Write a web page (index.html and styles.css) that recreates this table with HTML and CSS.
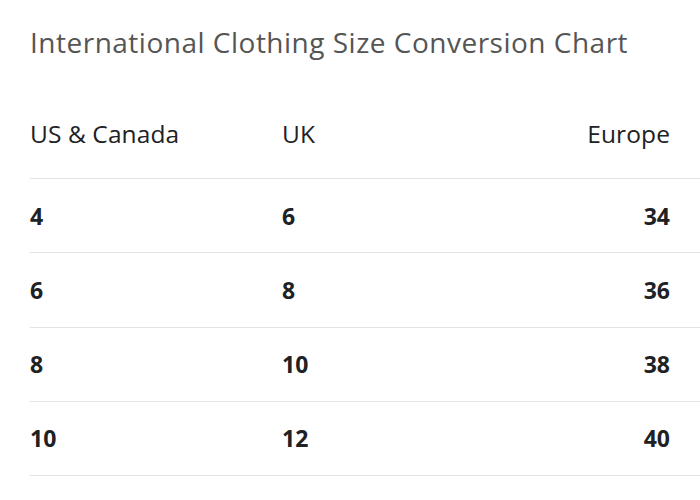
FILE: index.html
```html
<!DOCTYPE html>
<html>
<head>
<meta charset="utf-8">
<link rel="stylesheet" href="styles.css">
</head>
<body>
<div class="page">
  <h1 class="title">International Clothing Size Conversion Chart</h1>
  <table class="chart">
    <thead>
      <tr><th class="c1">US &amp; Canada</th><th class="c2">UK</th><th class="c3">Europe</th></tr>
    </thead>
    <tbody>
      <tr><td class="c1">4</td><td class="c2">6</td><td class="c3">34</td></tr>
      <tr><td class="c1">6</td><td class="c2">8</td><td class="c3">36</td></tr>
      <tr><td class="c1">8</td><td class="c2">10</td><td class="c3">38</td></tr>
      <tr><td class="c1">10</td><td class="c2">12</td><td class="c3">40</td></tr>
    </tbody>
  </table>
</div>
</body>
</html>
```
FILE: styles.css
```css
html, body { margin: 0; padding: 0; background: #fff; }
body { font-family: "Open Sans", "Liberation Sans", sans-serif; }
.page { padding: 22px 0 0 30px; width: 670px; }
.title {
  margin: 0;
  font-size: 28px;
  font-weight: 400;
  color: #555555;
  line-height: 40px;
  letter-spacing: 0.5px;
}
.chart {
  width: 670px;
  border-collapse: collapse;
  margin-top: 52px;
}
.chart th, .chart td {
  padding: 0;
  color: #202124;
  text-align: left;
}
.chart th {
  font-size: 24.5px;
  font-weight: 400;
  border-bottom: 1px solid #e3e3e3;
  height: 61px;
  vertical-align: top;
  padding-top: 3px;
  letter-spacing: 0.1px;
}
.chart td {
  font-size: 23px;
  font-weight: 700;
  height: 73.25px;
  vertical-align: middle;
  border-bottom: 1px solid #e3e3e3;
}
.c1 { width: 252px; }
.c2 { width: 250px; }
.chart .c3 { text-align: right; padding-right: 30px; }
```
